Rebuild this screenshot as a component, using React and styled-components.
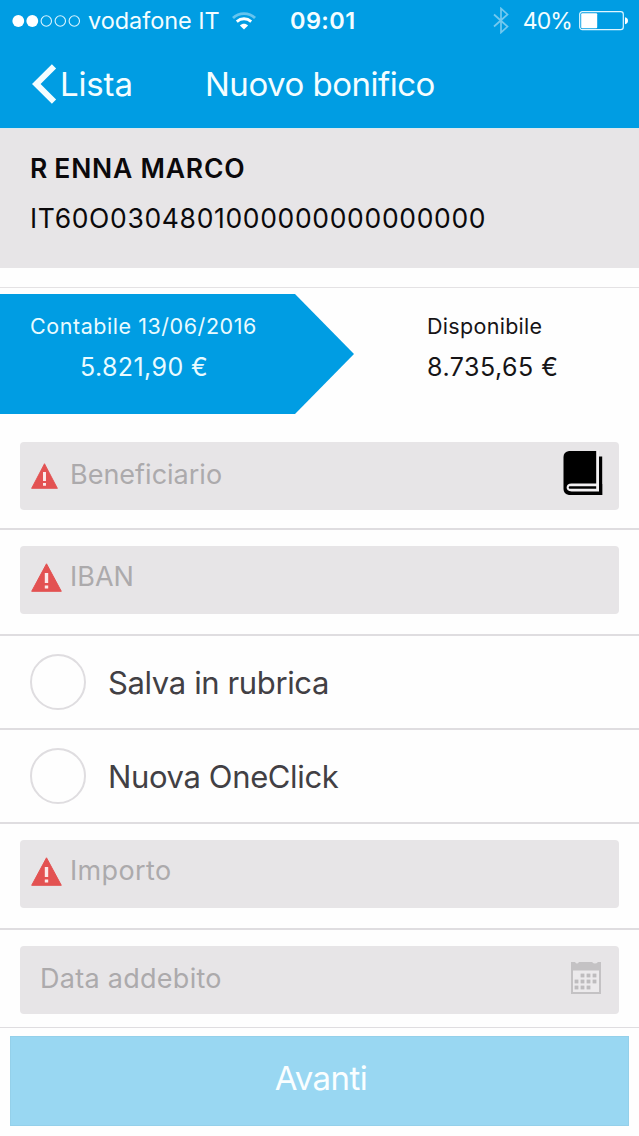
import React from 'react';
import styled, { createGlobalStyle } from 'styled-components';

const GlobalStyle = createGlobalStyle`
    * {
        box-sizing: border-box;
    }

    body {
        margin: 0;
        background-color: #fefefe;
        font-family: Inter, "Liberation Sans", sans-serif;
    }
`;

const Screen = styled.div`
    width: 639px;
    height: 1136px;
    display: flex;
    flex-direction: column;
    overflow: hidden;
    background-color: #fefefe;
`;

const Label = styled.span`
    display: block;
    white-space: nowrap;
    font-size: ${props => props.$size}px;
    font-weight: ${props => props.$weight || 400};
    letter-spacing: ${props => props.$spacing || 0}px;
    line-height: 40px;

    .label__wide {
        letter-spacing: 7px;
    }
`;

const Header = styled.header`
    height: 128px;
    color: #f4fdff;
    background-color: #009de3;
`;

const StatusBar = styled.div`
    height: 41px;
    display: grid;
    grid-template-columns: 278px 1fr auto;
    align-items: center;
    padding: 0 10px 0 12px;

    .status__group {
        display: flex;
        align-items: center;
    }

    .status__signal {
        margin-right: 7px;
    }

    .status__wifi {
        margin-left: 12px;
    }

    .status__bluetooth {
        margin-right: 14px;
    }

    .status__battery {
        margin-left: 7px;
    }
`;

const NavBar = styled.div`
    height: 86px;
    display: grid;
    grid-template-columns: 173px 1fr;
    align-items: center;
    padding-left: 32px;
`;

const BackButton = styled.button`
    display: flex;
    align-items: center;
    gap: 3px;
    padding: 0;
    border: none;
    color: inherit;
    background: none;
    font-family: inherit;
`;

const Account = styled.section`
    height: 140px;
    padding: 19px 30px 0;
    color: #0b090b;
    background-color: #e7e5e7;
    border-top: 1px solid #d9e9ee;

    .account__iban {
        margin-top: 10px;
    }
`;

const Balances = styled.section`
    height: 146px;
    margin-top: 19px;
    padding-top: 6px;
    display: flex;
    border-top: 1px solid #e4e2e4;
`;

const Balance = styled.div`
    width: ${props => props.$width}px;
    height: 120px;
    padding: 12px 0 0 ${props => props.$indent}px;
    color: ${props => props.$active ? '#e9fbff' : '#161416'};
    background-color: ${props => props.$active ? '#009de3' : 'transparent'};
    clip-path: ${props => props.$active ? 'polygon(0 0, 295px 0, 100% 50%, 295px 100%, 0 100%)' : 'none'};

    .balance__amount {
        margin-top: 1px;
        padding-left: ${props => props.$active ? 50 : 0}px;
    }
`;

const FieldRow = styled.div`
    height: ${props => props.$height}px;
    padding: ${props => props.$top}px 20px 0;
    border-bottom: ${props => props.$line || 2}px solid #dfdde0;
`;

const Field = styled.div`
    height: 68px;
    display: flex;
    align-items: flex-start;
    padding: 0 16px 0 ${props => props.$left || 10}px;
    border-radius: 4px;
    color: #acaaac;
    background-color: #e7e5e7;

    .field__alert {
        width: 40px;
        flex: none;
        padding: ${props => props.$alertTop}px 0 0 0.5px;
    }

    .field__label {
        margin-top: ${props => props.$labelTop}px;
    }

    .field__icon {
        margin-left: auto;
        padding-top: ${props => props.$iconTop}px;
    }

    svg {
        display: block;
    }
`;

const OptionRow = styled.div`
    height: 94px;
    display: flex;
    align-items: center;
    gap: 22px;
    padding-left: 30px;
    color: #424044;
    border-bottom: 2px solid #dfdde0;

    .option__label {
        padding-top: 2px;
    }
`;

const Radio = styled.span`
    width: 56px;
    height: 56px;
    border: 2px solid #dfdde0;
    border-radius: 50%;
`;

const SubmitButton = styled.button`
    height: 90px;
    margin: 8px 10px 0;
    padding: 0 0 6px 3px;
    border: 1px solid #94d0ea;
    color: #fafeff;
    background-color: #99d7f2;
    font-family: inherit;
`;

const SignalDots = () => (
    <svg className="status__signal" width="69" height="14" viewBox="0 0 69 14">
        {[0, 1, 2, 3, 4].map(i => (
            <circle
                key={i}
                cx={6.3 + i * 14}
                cy="7"
                r={i < 2 ? 5.9 : 5.2}
                fill={i < 2 ? '#fff' : 'none'}
                stroke={i < 2 ? 'none' : '#d8f4ff'}
                strokeWidth="1.1"
            />
        ))}
    </svg>
);

const WifiIcon = () => (
    <svg className="status__wifi" width="24" height="18" viewBox="0 0 24 18" fill="none">
        <path d="M1 6C7 .2 17 .2 23 6" stroke="#66c4ee" strokeWidth="2.8" />
        <path d="M4.8 9.6C9 5.8 15 5.8 19.2 9.6" stroke="#fff" strokeWidth="2.8" />
        <path d="M12 17.6L7.9 13.4C10.3 11.3 13.7 11.3 16.1 13.4Z" fill="#fff" />
    </svg>
);

const BluetoothIcon = () => (
    <svg className="status__bluetooth" width="16" height="27" viewBox="0 0 16 27" fill="none">
        <path d="M1 7.5L14.5 19.5L8 25.5V1.5L14.5 7.5L1 19.5" stroke="#74c9ef" strokeWidth="1.7" />
    </svg>
);

const BatteryIcon = () => (
    <svg className="status__battery" width="50" height="20" viewBox="0 0 50 20">
        <rect x=".7" y=".7" width="43.6" height="18" rx="2.6" fill="none" stroke="#dff6ff" strokeWidth="1.2" />
        <rect x="2.2" y="2.3" width="16" height="15" rx="1" fill="#fff" />
        <path d="M46 6.2C50 6.8 50 12.6 46 13.2Z" fill="#fff" />
    </svg>
);

const BackIcon = () => (
    <svg width="25" height="40" viewBox="0 0 25 40" fill="none">
        <path d="M22 2.4L4.2 20L22 37.6" stroke="#f4fdff" strokeWidth="6" />
    </svg>
);

const AlertIcon = ({ width, height }) => (
    <svg width={width} height={height} viewBox="0 0 31 29" preserveAspectRatio="none">
        <path d="M15.5 .8L30.3 28.3H.7Z" fill="#e35252" stroke="#e35252" strokeLinejoin="round" />
        <path d="M13.8 10H17.2V20H13.8ZM13.8 22.4H17.2V25.4H13.8Z" fill="#fbeaea" />
    </svg>
);

const BookIcon = () => (
    <svg width="40" height="46" viewBox="0 0 40 46">
        <path d="M6 1H34V34H39.2V45H6Q.5 44 .5 39V7Q.5 2 6 1Z" fill="#000" />
        <path d="M33.2 .5H36V41.5H8.5Q3.6 41 3.6 37.5Q3.8 33.6 8.5 33.5H33.2Z" fill="#f3f1f3" />
        <path d="M36 6.5H39.2V45H36Z" fill="#000" />
        <path d="M6.3 36.2H33.2V38.8H6.3Q5 37.5 6.3 36.2Z" fill="#000" />
    </svg>
);

const CALENDAR_DAYS = [
    [12, 14], [18, 14], [24, 14],
    [6, 20], [12, 20], [18, 20], [24, 20],
    [6, 26], [12, 26], [18, 26],
];

const CalendarIcon = () => (
    <svg width="33" height="34" viewBox="0 0 33 34">
        <path d="M1 1H5Q7 4 9 1H22Q25 4 28 1H31V33H1Z" fill="#c4c2c4" />
        <path d="M3 9.5H29V31H3Z" fill="#eceaec" />
        {CALENDAR_DAYS.map(([x, y]) => (
            <rect key={`${x}-${y}`} x={x - 1.4} y={y - 1.4} width="3.8" height="3.8" fill="#bebcbe" />
        ))}
    </svg>
);

const OPTIONS = [
    { name: 'Salva in rubrica', spacing: -0.37 },
    { name: 'Nuova OneClick', spacing: -0.37 },
];

const App = () => {
    return (
        <>
            <GlobalStyle />
            <Screen>
                <Header>
                    <StatusBar>
                        <div className="status__group">
                            <SignalDots />
                            <Label $size={23.5} $spacing={-0.05}>vodafone IT</Label>
                            <WifiIcon />
                        </div>
                        <Label $size={23.5} $weight={600} $spacing={0.4}>09:01</Label>
                        <div className="status__group">
                            <BluetoothIcon />
                            <Label $size={23} $spacing={-0.9}>40%</Label>
                            <BatteryIcon />
                        </div>
                    </StatusBar>
                    <NavBar>
                        <BackButton>
                            <BackIcon />
                            <Label $size={33} $spacing={-0.15}>Lista</Label>
                        </BackButton>
                        <Label $size={33} $spacing={-0.5}>Nuovo bonifico</Label>
                    </NavBar>
                </Header>
                <Account>
                    <Label $size={26.5} $weight={600} $spacing={0.8}>
                        <span className="label__wide">R</span>ENNA MARCO
                    </Label>
                    <Label className="account__iban" $size={26.5} $spacing={0.66}>IT60O0304801000000000000000</Label>
                </Account>
                <Balances>
                    <Balance $active $width={354} $indent={30}>
                        <Label $size={21.5} $spacing={0.55}>Contabile 13/06/2016</Label>
                        <Label className="balance__amount" $size={25} $spacing={0.4}>5.821,90 €</Label>
                    </Balance>
                    <Balance $width={285} $indent={73}>
                        <Label $size={21.5} $spacing={0.3}>Disponibile</Label>
                        <Label className="balance__amount" $size={25} $spacing={0.5}>8.735,65 €</Label>
                    </Balance>
                </Balances>
                <FieldRow $height={97} $top={9}>
                    <Field $labelTop={13} $alertTop={21} $iconTop={8}>
                        <span className="field__alert"><AlertIcon width={27} height={26} /></span>
                        <Label className="field__label" $size={27}>Beneficiario</Label>
                        <span className="field__icon"><BookIcon /></span>
                    </Field>
                </FieldRow>
                <FieldRow $height={106} $top={16}>
                    <Field $labelTop={11} $alertTop={17}>
                        <span className="field__alert"><AlertIcon width={31} height={29} /></span>
                        <Label className="field__label" $size={27}>IBAN</Label>
                    </Field>
                </FieldRow>
                {OPTIONS.map(option => (
                    <OptionRow key={option.name}>
                        <Radio />
                        <Label className="option__label" $size={31} $spacing={option.spacing}>{option.name}</Label>
                    </OptionRow>
                ))}
                <FieldRow $height={106} $top={16}>
                    <Field $labelTop={11} $alertTop={17}>
                        <span className="field__alert"><AlertIcon width={31} height={29} /></span>
                        <Label className="field__label" $size={27} $spacing={0.35}>Importo</Label>
                    </Field>
                </FieldRow>
                <FieldRow $height={98} $top={16} $line={1}>
                    <Field $labelTop={13} $left={20} $iconTop={15}>
                        <Label className="field__label" $size={27} $spacing={0.28}>Data addebito</Label>
                        <span className="field__icon"><CalendarIcon /></span>
                    </Field>
                </FieldRow>
                <SubmitButton>
                    <Label $size={33} $spacing={-0.5}>Avanti</Label>
                </SubmitButton>
            </Screen>
        </>
    );
};

export default App;
